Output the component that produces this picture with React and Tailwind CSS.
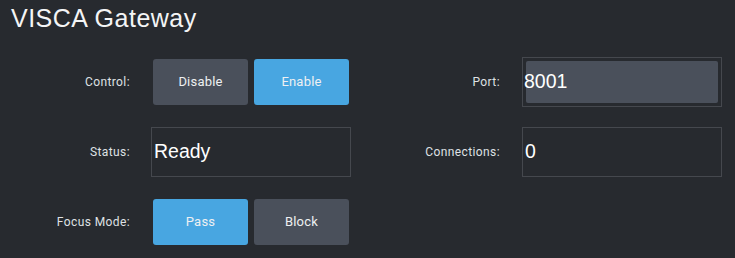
import React from 'react'

const label = "flex items-center justify-end text-[12px] tracking-[0.4px] text-[#dfe1e4] font-['Roboto',sans-serif]"
const btn = "flex-1 rounded-[3px] flex items-center justify-center text-[13px] tracking-[0.2px] text-[#eef0f2] font-['Roboto',sans-serif]"
const value = "text-[19.5px] text-white font-['Liberation_Sans',Arial,sans-serif]"

function Toggle({ options, active }) {
  return (
    <div className="flex gap-[6px] p-[2px]">
      {options.map((o) => (
        <div key={o} className={`${btn} ${o === active ? 'bg-[#48a6e1]' : 'bg-[#4a505b]'}`}>
          {o}
        </div>
      ))}
    </div>
  )
}

export default function App() {
  return (
    <div className="w-[735px] h-[258px] bg-[#272a2f] overflow-hidden">
      <h1 className="pl-[11px] pt-[4px] text-[25px] leading-[29px] tracking-[0.5px] text-[#f4f5f6] font-['Liberation_Sans',Arial,sans-serif]">
        VISCA Gateway
      </h1>

      <div className="mt-[24px] grid grid-cols-[151px_200px_171px_200px] auto-rows-[50px] gap-y-[20px]">
        {/* Row 1 */}
        <div className={`${label} pr-[21px]`}>Control:</div>
        <Toggle options={['Disable', 'Enable']} active="Enable" />
        <div className={`${label} pr-[22px]`}>Port:</div>
        <div className="border border-[#45484e] p-[3px]">
          <div className="h-full bg-[#4a505b] rounded-[2px] flex items-center">
            <span className={`${value} -ml-[2px]`}>8001</span>
          </div>
        </div>

        {/* Row 2 */}
        <div className={`${label} pr-[21px]`}>Status:</div>
        <div className="border border-[#45484e] flex items-center pl-[2px]">
          <span className={value}>Ready</span>
        </div>
        <div className={`${label} pr-[22px]`}>Connections:</div>
        <div className="border border-[#45484e] flex items-center pl-[2px]">
          <span className={value}>0</span>
        </div>

        {/* Row 3 */}
        <div className={`${label} pr-[21px]`}>Focus Mode:</div>
        <Toggle options={['Pass', 'Block']} active="Pass" />
      </div>
    </div>
  )
}
